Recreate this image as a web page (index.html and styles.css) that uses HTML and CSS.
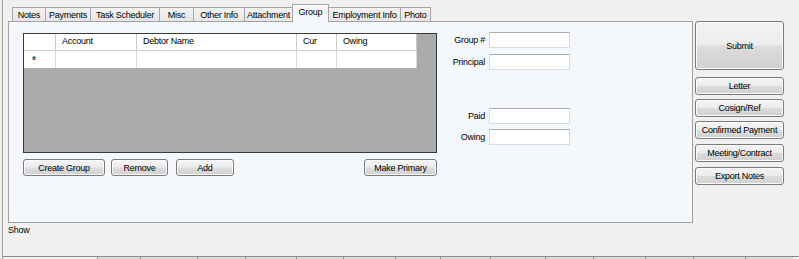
FILE: index.html
```html
<!DOCTYPE html>
<html>
<head>
<meta charset="utf-8">
<link rel="stylesheet" href="styles.css">
</head>
<body>
<div class="window">
  <div class="main">
    <div class="tabctl">
      <div class="tabs">
        <div class="tab t-notes">Notes</div>
        <div class="tab t-pay">Payments</div>
        <div class="tab t-task">Task Scheduler</div>
        <div class="tab t-misc">Misc</div>
        <div class="tab t-other">Other Info</div>
        <div class="tab t-att">Attachment</div>
        <div class="tab tab-sel t-group">Group</div>
        <div class="tab t-emp">Employment Info</div>
        <div class="tab t-photo">Photo</div>
      </div>
      <div class="panel">
        <div class="left">
          <div class="grid">
            <div class="grow ghead">
              <div class="cell rh"></div>
              <div class="cell c-acc">Account</div>
              <div class="cell c-deb">Debtor Name</div>
              <div class="cell c-cur">Cur</div>
              <div class="cell c-owe">Owing</div>
            </div>
            <div class="grow gdata">
              <div class="cell rh"><span class="star">*</span></div>
              <div class="cell c-acc"></div>
              <div class="cell c-deb"></div>
              <div class="cell c-cur"></div>
              <div class="cell c-owe"></div>
            </div>
          </div>
          <div class="btnrow">
            <button class="btn b-create">Create Group</button>
            <button class="btn b-remove">Remove</button>
            <button class="btn b-add">Add</button>
            <button class="btn b-primary">Make Primary</button>
          </div>
        </div>
        <div class="form">
          <div class="frow r1"><span class="lbl">Group #</span><span class="inp"></span></div>
          <div class="frow r2"><span class="lbl">Principal</span><span class="inp"></span></div>
          <div class="frow r3"><span class="lbl">Paid</span><span class="inp"></span></div>
          <div class="frow r4"><span class="lbl">Owing</span><span class="inp"></span></div>
        </div>
      </div>
    </div>
    <div class="side">
      <button class="btn s-submit">Submit</button>
      <button class="btn s-btn s-letter">Letter</button>
      <button class="btn s-btn">Cosign/Ref</button>
      <button class="btn s-btn">Confirmed Payment</button>
      <button class="btn s-btn s-wide">Meeting/Contract</button>
      <button class="btn s-btn s-wide">Export Notes</button>
    </div>
  </div>
  <div class="show">Show</div>
  <div class="bottom">
    <div class="seg seg-first"></div>
    <div class="seg w43"></div>
    <div class="seg w57"></div>
    <div class="seg w48"></div>
    <div class="seg w51"></div>
    <div class="seg w47"></div>
    <div class="seg w52"></div>
    <div class="seg w45"></div>
    <div class="seg w50"></div>
    <div class="seg w55"></div>
    <div class="seg w48"></div>
    <div class="seg w52"></div>
    <div class="seg w48"></div>
    <div class="seg w52"></div>
    <div class="seg w48"></div>
  </div>
</div>
</body>
</html>
```

FILE: styles.css
```css
* { box-sizing: border-box; }
html, body {
  margin: 0;
  padding: 0;
  width: 799px;
  height: 259px;
  overflow: hidden;
  background: #f0f0f0;
  font-family: "Liberation Sans", Arial, sans-serif;
  font-size: 9px;
  letter-spacing: -0.25px;
  color: #000;
}
.window {
  margin-left: 2px;
  border-left: 1px solid #a3a3a3;
  height: 259px;
  padding-left: 5px;
  padding-top: 4px;
  display: flex;
  flex-direction: column;
}
.main {
  display: flex;
  height: 219px;
}
.tabctl {
  width: 685px;
  display: flex;
  flex-direction: column;
}
.tabs {
  height: 17px;
  display: flex;
  align-items: flex-end;
  padding-left: 4px;
}
.tab {
  height: 14px;
  border: 1px solid #a6a6a6;
  border-bottom: none;
  margin-right: -1px;
  background: linear-gradient(#f3f3f3, #e6e6e6);
  display: flex;
  align-items: center;
  justify-content: center;
  line-height: 12px;
  white-space: nowrap;
}
.tab-sel {
  height: 18px;
  margin-bottom: -1px;
  background: #f4f7fc;
  position: relative;
  z-index: 1;
  padding-bottom: 3px;
}
.t-notes { width: 34px; }
.t-pay { width: 46px; }
.t-task { width: 70px; }
.t-misc { width: 35px; }
.t-other { width: 52px; }
.t-att { width: 49px; }
.t-group { width: 37px; }
.t-emp { width: 73px; }
.t-photo { width: 31px; }

.panel {
  height: 202px;
  border: 1px solid #a0a0a0;
  background: #f4f7fc;
  display: flex;
  padding: 11px 0 0 14px;
}
.left {
  width: 414px;
  display: flex;
  flex-direction: column;
}
.grid {
  height: 120px;
  border: 1px solid #3a3a3a;
  background: #ababab;
}
.grow {
  display: flex;
  height: 17px;
  background: #ffffff;
  width: 393px;
}
.ghead {
  border-bottom: 1px solid #cfcfcf;
}
.gdata {
  height: 17px;
}
.cell {
  border-right: 1px solid #c9c9c9;
  padding-left: 6px;
  line-height: 15px;
  white-space: nowrap;
}
.gdata .cell { border-right-color: #dadada; }
.rh { width: 32px; }
.c-acc { width: 81px; }
.c-deb { width: 160px; }
.c-cur { width: 40px; }
.c-owe { width: 80px; }
.star {
  font-size: 10px;
  font-weight: bold;
  color: #444;
  line-height: 19px;
  padding-left: 2px;
}
.btnrow {
  display: flex;
  margin-top: 6px;
  height: 17px;
}
.btn {
  font: inherit;
  letter-spacing: inherit;
  color: #000;
  margin: 0;
  padding: 0;
  border: 1px solid #7a7a7a;
  border-radius: 3px;
  background: linear-gradient(#f4f4f4 0%, #ececec 48%, #dcdcdc 52%, #d0d0d0 100%);
  box-shadow: inset 0 0 0 1px #fbfbfb;
  line-height: 14px;
  white-space: nowrap;
  cursor: default;
}
.b-create { width: 82px; }
.b-remove { width: 57px; margin-left: 6px; }
.b-add { width: 58px; margin-left: 8px; }
.b-primary { width: 73px; margin-left: auto; }

.form {
  margin-left: 4px;
  margin-top: -1px;
  display: flex;
  flex-direction: column;
}
.frow {
  display: flex;
  align-items: center;
  height: 16px;
}
.r2 { margin-top: 6px; }
.r3 { margin-top: 38px; }
.r4 { margin-top: 5px; }
.lbl {
  width: 44px;
  text-align: right;
  margin-right: 4px;
  white-space: nowrap;
}
.inp {
  width: 81px;
  height: 16px;
  background: #fff;
  border: 1px solid #d6dbe2;
  border-top-color: #a9acb3;
}

.side {
  margin-left: 2px;
  width: 89px;
  display: flex;
  flex-direction: column;
}
.s-submit {
  margin-top: 17px;
  height: 49px;
}
.s-btn {
  height: 18px;
  margin-top: 4px;
}
.s-letter { margin-top: 7px; }
.s-wide { margin-top: 5px; }

.show {
  line-height: 12px;
  height: 12px;
  margin-top: 1px;
}
.bottom {
  margin-top: auto;
  margin-left: -5px;
  height: 3px;
  display: flex;
  border-top: 1px solid #8a8a8a;
}
.seg {
  height: 2px;
  border-left: 1px solid #8a8a8a;
  background: #dadada;
}
.seg-first { width: 94px; border-left: none; background: #f0f0f0; }
.w43 { width: 43px; }
.w45 { width: 45px; }
.w47 { width: 47px; }
.w48 { width: 48px; }
.w50 { width: 50px; }
.w51 { width: 51px; }
.w52 { width: 52px; }
.w55 { width: 55px; }
.w57 { width: 57px; }
```
